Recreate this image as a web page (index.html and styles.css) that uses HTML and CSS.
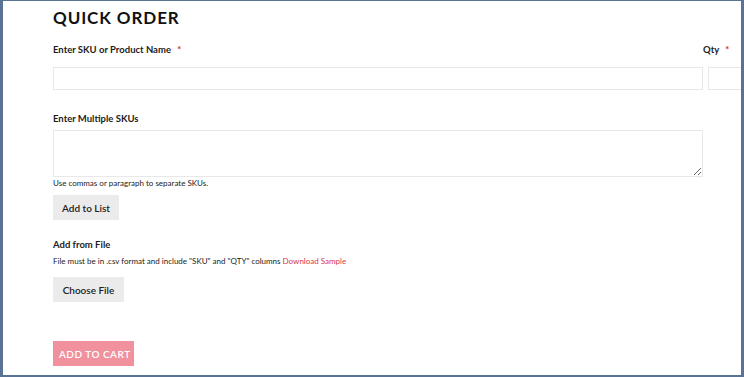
FILE: index.html
```html
<!DOCTYPE html>
<html lang="en">
<head>
<meta charset="utf-8">
<title>Quick Order</title>
<link rel="stylesheet" href="styles.css">
</head>
<body>
<div class="frame">
  <div class="page">
    <h1 class="title">QUICK ORDER</h1>
    <div class="row">
      <div class="field sku">
        <label class="label">Enter SKU or Product Name <span class="req">*</span></label>
        <input class="input" type="text">
      </div>
      <div class="field qty">
        <label class="label">Qty <span class="req">*</span></label>
        <input class="input" type="text">
      </div>
    </div>
    <div class="block multi">
      <label class="label">Enter Multiple SKUs</label>
      <textarea class="textarea"></textarea>
      <p class="note">Use commas or paragraph to separate SKUs.</p>
      <button class="btn btn-grey btn-list" type="button">Add to List</button>
    </div>
    <div class="block file">
      <label class="label">Add from File</label>
      <p class="note note-file">File must be in .csv format and include "SKU" and "QTY" columns <a class="link" href="#">Download Sample</a></p>
      <button class="btn btn-grey btn-file" type="button">Choose File</button>
    </div>
    <button class="btn btn-cart" type="button">ADD TO CART</button>
  </div>
</div>
</body>
</html>
```

FILE: styles.css
```css
* { box-sizing: border-box; }
html, body { margin: 0; padding: 0; background: #ffffff; }
body { font-family: "Lato", "Open Sans", sans-serif; color: #1a1a1a; }

.frame {
  width: 744px;
  height: 377px;
  border-style: solid;
  border-color: #5a7394;
  border-width: 1px 3px 2px 3px;
  overflow: hidden;
}

.page {
  padding: 6px 0 0 50px;
  width: 760px;
  display: flex;
  flex-direction: column;
  align-items: flex-start;
}

.title {
  margin: 0;
  font-size: 17px;
  line-height: 22px;
  font-weight: 700;
  letter-spacing: 0.9px;
  color: #111;
}

.row {
  display: grid;
  grid-template-columns: 650px 40px;
  column-gap: 5px;
  margin-top: 14px;
}
.field { display: flex; flex-direction: column; }
.qty .label { margin-left: -5px; }

.label {
  font-size: 9.5px;
  line-height: 14px;
  font-weight: 700;
  color: #1c1c1c;
}
.req { color: #e02b2b; margin-left: 4px; }

.input {
  margin-top: 10px;
  height: 23px;
  border: 1px solid #e8e8e8;
  background: #fff;
  outline: none;
  padding: 0 6px;
}

.block { display: flex; flex-direction: column; align-items: flex-start; }
.multi { margin-top: 22px; }
.textarea {
  margin-top: 4px;
  width: 650px;
  height: 47px;
  border: 1px solid #e8e8e8;
  resize: vertical;
  outline: none;
  font-family: inherit;
}
.note {
  margin: 1px 0 0;
  font-size: 8px;
  line-height: 11px;
  color: #222;
}
.link { color: #d9364c; text-decoration: none; }

.btn {
  border: none;
  font-family: inherit;
  font-size: 10px;
  white-space: nowrap;
  cursor: pointer;
}
.btn-grey { background: #ebebeb; color: #222; font-weight: 600; }
.btn-list { margin-top: 6px; width: 66px; height: 25px; }

.file { margin-top: 18px; }
.note-file { margin-top: 4px; }
.btn-file { margin-top: 10px; width: 71px; height: 25px; }

.btn-cart {
  margin-top: 39px;
  width: 81px;
  height: 25px;
  background: #f0919d;
  color: #fff;
  font-weight: 600;
  letter-spacing: 0.5px;
}
```
